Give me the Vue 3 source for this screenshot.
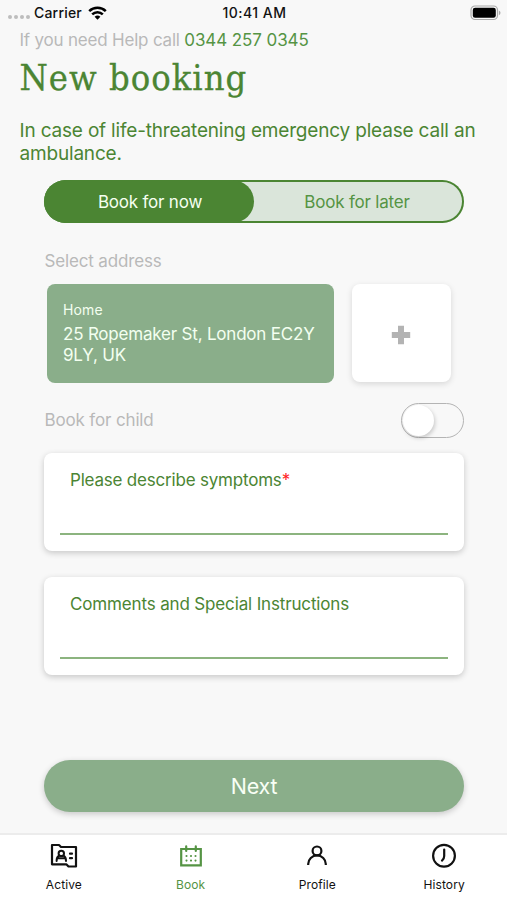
<script setup>
import { ref } from 'vue'

const mode = ref('now')
const forChild = ref(false)
const activeTab = ref('Book')
const tabs = ['Active', 'Book', 'Profile', 'History']
</script>

<template>
  <div class="screen">
    <header class="status">
      <div class="carrier">
        <span class="dots"><i></i><i></i><i></i><i></i></span>
        <span class="carrier-name">Carrier</span>
        <svg class="wifi" width="19" height="14" viewBox="0 0 19 14" fill="none" stroke="#000" stroke-width="2.5">
          <path d="M1.2 5.2a11.8 11.8 0 0 1 16.6 0M4.2 8.4a7.5 7.5 0 0 1 10.6 0" />
          <path d="M9.5 13.7 6.6 10.8a4.2 4.2 0 0 1 5.8 0z" fill="#000" stroke="none" />
        </svg>
      </div>
      <span class="time">10:41 AM</span>
      <svg class="battery" width="31" height="16" viewBox="0 0 31 16">
        <rect x="1" y="1" width="26.5" height="13.5" rx="4" fill="none" stroke="#a9a9a9" stroke-width="1.2" />
        <rect x="2.8" y="2.8" width="23" height="9.9" rx="2.3" fill="#000" />
        <path d="M28.9 5.4q1.6.7 1.6 2.4t-1.6 2.4z" fill="#a9a9a9" />
      </svg>
    </header>

    <section class="intro">
      <p class="help">If you need Help call <a class="phone">0344 257 0345</a></p>
      <h1 class="title">New booking</h1>
      <p class="warning">In case of life-threatening emergency please call an ambulance.</p>
    </section>

    <main class="form">
      <div class="segments">
        <button class="segment" :class="{ selected: mode === 'now' }" @click="mode = 'now'"><span class="now-label">Book for now</span></button>
        <button class="segment" :class="{ selected: mode === 'later' }" @click="mode = 'later'"><span class="later-label">Book for later</span></button>
      </div>

      <p class="label select-label">Select address</p>
      <div class="addresses">
        <article class="address">
          <p class="place">Home</p>
          <p class="street">25 Ropemaker St, London EC2Y<br />9LY, UK</p>
        </article>
        <button class="add" aria-label="Add address">
          <svg width="20" height="20" viewBox="0 0 20 20"><path d="M7 .8h6V7h6.2v6H13v6.2H7V13H.8V7H7z" fill="#b3b3b3" /></svg>
        </button>
      </div>

      <div class="child-row">
        <span class="label child-label">Book for child</span>
        <button class="toggle" :class="{ on: forChild }" aria-label="Book for child" @click="forChild = !forChild"><i class="knob"></i></button>
      </div>

      <div class="field">
        <label class="field-label symptoms">Please describe symptoms<span class="required">*</span></label>
        <div class="line"></div>
      </div>
      <div class="field">
        <label class="field-label comments">Comments and Special Instructions</label>
        <div class="line"></div>
      </div>

      <button class="next">Next</button>
    </main>

    <nav class="tabs">
      <button v-for="tab in tabs" :key="tab" class="tab" :class="{ current: tab === activeTab }" @click="activeTab = tab">
        <svg class="tab-icon" width="28" height="26" viewBox="0 0 28 26" fill="none" stroke="currentColor" stroke-width="2.2" stroke-linecap="round" stroke-linejoin="round">
          <g v-if="tab === 'Active'">
            <path d="M2 2h7l2 2h15v19.5h-7.5l-2.2-2.2H2z" />
            <path d="M6.6 18q0-4.2 2.4-5.4M16 18q0-4.2-2.4-5.4M8 15.2h6.6" stroke-width="2" />
            <circle cx="11.3" cy="10.4" r="2.7" stroke-width="2" />
            <path d="M20 10.7h2M20 15.2h2" />
          </g>
          <g v-else-if="tab === 'Book'">
            <path d="M4.2 6h19.6v16.4H4.2zM9.2 3.4V8M18.8 3.4V8" stroke-linejoin="miter" />
            <path d="M9.5 13h.01M14 13h.01M18.5 13h.01M9.5 17.6h.01M14 17.6h.01M18.5 17.6h.01" stroke-width="2.1" />
          </g>
          <g v-else-if="tab === 'Profile'">
            <circle cx="14" cy="7.9" r="4.4" />
            <path d="M5.2 22v-1a8.8 8.6 0 0 1 17.6 0v1" stroke-linecap="butt" />
          </g>
          <g v-else>
            <circle cx="14" cy="12.8" r="10.9" />
            <path d="M14.2 6.5v6.5q0 2.8-2.2 4.6" />
          </g>
        </svg>
        <span class="tab-label" :class="'tab-' + tab.toLowerCase()">{{ tab }}</span>
      </button>
    </nav>
  </div>
</template>

<style>
body { background: #f8f8f8; }
</style>

<style scoped>
* { box-sizing: border-box; }
p, h1 { margin: 0; }
button { border: 0; padding: 0; font: inherit; background: none; }
.screen {
  width: 507px;
  height: 900px;
  display: flex;
  flex-direction: column;
  overflow: hidden;
  background: #f8f8f8;
  color: #4b8533;
  font-family: Inter, "Liberation Sans", sans-serif;
  white-space: nowrap;
}
.status {
  height: 26px;
  flex: none;
  display: grid;
  grid-template-columns: 1fr auto 1fr;
  align-items: center;
  padding: 0 6px 0 8px;
  color: #111;
  font-size: 14px;
  font-weight: 500;
}
.carrier { display: flex; align-items: center; align-self: start; height: 25px; }
.time { line-height: 26px; align-self: start; letter-spacing: .5px; }
.carrier-name { letter-spacing: .2px; }
.dots { display: flex; gap: 2px; margin: 9px 4px 0 0; }
.dots i { width: 4px; height: 4px; border-radius: 50%; background: #bdbdbd; }
.wifi { margin-left: 6px; }
.battery { justify-self: end; }
.intro { padding: 0 20px 0 19.5px; height: 154px; flex: none; }
.help { color: #b9b9b9; font-size: 17px; line-height: 28px; letter-spacing: -.2px; }
.phone { color: #559444; letter-spacing: -.1px; }
.title {
  font-family: "Roboto Slab", "DejaVu Serif Condensed", "DejaVu Serif", serif;
  font-stretch: condensed;
  font-size: 36px;
  font-weight: 400;
  line-height: 48px;
  letter-spacing: 1px;
  -webkit-text-stroke: .3px #4b8533;
}
.warning { margin-top: 17px; font-size: 19px; line-height: 23px; letter-spacing: -.18px; white-space: normal; }
.form { padding: 0 43px 0 44px; flex: 1; display: flex; flex-direction: column; }
.segments {
  height: 43px;
  flex: none;
  display: flex;
  border-radius: 22px;
  background: #dae5da;
  box-shadow: inset 0 0 0 2px #4b8533;
}
.segment { flex: 1; border-radius: 22px; color: #559444; font-size: 17px; letter-spacing: -.2px; }
.segment.selected { background: #4b8533; color: #f5fff0; }
.now-label { padding-left: 2px; }
.later-label { padding-right: 4px; }
.label { color: #b9b9b9; font-size: 17px; letter-spacing: -.15px; }
.select-label { margin-top: 27px; padding-left: .5px; line-height: 22px; }
.addresses { display: flex; gap: 18px; margin: 12px 0 0 3px; }
.address {
  width: 287px;
  height: 99px;
  padding: 16px;
  border-radius: 8px;
  background: #8aae8a;
  color: #f3fff0;
}
.place { font-size: 14px; line-height: 20px; letter-spacing: .15px; }
.street { margin-top: 4px; font-size: 17px; line-height: 21px; letter-spacing: -.2px; }
.add {
  width: 99px;
  height: 98px;
  padding-top: 3px;
  display: grid;
  place-items: center;
  border-radius: 8px;
  background: #fff;
  box-shadow: 0 2px 6px #0002;
}
.add svg { margin-right: 1px; }
.child-row { height: 36px; margin-top: 19px; display: flex; align-items: center; justify-content: space-between; }
.child-label { padding-left: .5px; }
.toggle {
  width: 63px;
  height: 35px;
  padding: 1px;
  display: flex;
  border: 1.5px solid #b4b4b4;
  border-radius: 18px;
}
.toggle.on { justify-content: flex-end; }
.knob { width: 31px; height: 31px; border-radius: 50%; background: #fff; box-shadow: 1px 2px 4px #0003; }
.field {
  height: 98px;
  flex: none;
  padding: 16px 16px 16px;
  display: flex;
  flex-direction: column;
  justify-content: space-between;
  border-radius: 8px;
  background: #fff;
  box-shadow: 0 2px 6px #0003;
}
.child-row + .field { margin-top: 15px; }
.field + .field { margin-top: 26px; }
.field-label { padding-left: 10px; font-size: 17px; line-height: 22px; letter-spacing: -.2px; }
.comments { letter-spacing: -.15px; }
.required { color: #f22; }
.line { height: 2px; background: #8cb47f; }
.next {
  height: 52px;
  flex: none;
  margin-top: 84.5px;
  padding-top: 1px;
  border-radius: 26px;
  background: #8aae8a;
  color: #f8fff5;
  font-size: 21.5px;
  letter-spacing: -.2px;
  box-shadow: 0 2px 6px #0003;
}
.tabs {
  height: 67px;
  flex: none;
  display: grid;
  grid-template-columns: repeat(4, 1fr);
  border-top: 2px solid #ececec;
  background: #fff;
}
.tab { display: flex; flex-direction: column; align-items: center; padding: 8px 0 0 1px; color: #111; }
.tab.current { color: #559444; }
.tab-icon { height: 26px; }
.tab-label { margin-top: 8px; font-size: 12px; line-height: 16px; letter-spacing: .1px; }
</style>
